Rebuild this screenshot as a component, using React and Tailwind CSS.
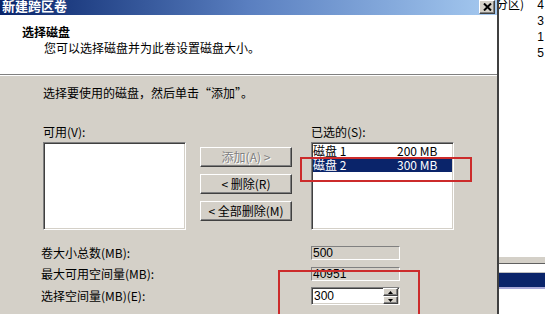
import React from "react"

const sunken = "border border-t-[#808080] border-l-[#808080] border-b-white border-r-white shadow-[inset_1px_1px_0_#404040,inset_-1px_-1px_0_#d4d0c8]"
const raised = "border border-t-white border-l-white border-b-[#404040] border-r-[#404040] shadow-[inset_-1px_-1px_0_#808080]"
const flat = "border border-t-[#808080] border-l-[#808080] border-b-white border-r-white"

function WinButton({ children, disabled }) {
  return (
    <div className={`h-[20px] w-[92px] flex items-center justify-center bg-[#d4d0c8] text-[12px] leading-[14px] ${raised} ${disabled ? "text-[#808080] [text-shadow:1px_1px_0_#fff]" : "text-black"}`}>
      {children}
    </div>
  )
}

function Field({ children }) {
  return (
    <div className={`h-[14px] w-[89px] flex items-center pl-[1px] bg-[#d4d0c8] text-[12px] leading-[12px] font-['Liberation_Sans',sans-serif] ${flat}`}>
      {children}
    </div>
  )
}

export default function App() {
  return (
    <div className="relative w-[545px] h-[314px] overflow-hidden flex bg-white text-black font-['Noto_Sans_CJK_SC',sans-serif]">
      {/* dialog */}
      <div className="w-[497px] flex flex-col bg-[#d4d0c8]">
        <div className="h-[15px] flex items-start justify-between bg-linear-to-r from-[#0a246a] via-[#5a7fc0] to-[#a6caf0]">
          <span className="pl-[2px] -mt-[3px] text-[13px] leading-[18px] font-bold text-white">新建跨区卷</span>
          <div className={`mr-[2px] w-[16px] h-[14px] flex items-center justify-center bg-[#d4d0c8] ${raised}`}>
            <svg width="9" height="8" viewBox="0 0 9 8">
              <path d="M1 0.5 L8 7.5 M8 0.5 L1 7.5" stroke="#000" strokeWidth="2" />
            </svg>
          </div>
        </div>

        <div className="h-[59px] bg-white pl-[22px] pt-[10px]">
          <div className="text-[12px] leading-[14px] font-bold">选择磁盘</div>
          <div className="pl-[22px] mt-[2px] text-[12px] leading-[14px]">您可以选择磁盘并为此卷设置磁盘大小。</div>
        </div>
        <div className="h-[2px] border-t border-t-[#808080] border-b border-b-white" />

        <div className="flex-1 pl-[43px] pt-[10px]">
          <div className="text-[12px] leading-[14px]">选择要使用的磁盘，然后单击“添加”。</div>

          <div className="flex mt-[25px]">
            <div className="w-[143px]">
              <div className="h-[17px] text-[12px] leading-[14px]">可用(V):</div>
              <div className={`h-[88px] bg-white ${sunken}`} />
            </div>
            <div className="ml-[14px] w-[92px] pt-[22px] flex flex-col gap-[7px]">
              <WinButton disabled>添加(A) &gt;</WinButton>
              <WinButton>&lt; 删除(R)</WinButton>
              <WinButton>&lt; 全部删除(M)</WinButton>
            </div>
            <div className="ml-[19px] w-[143px]">
              <div className="h-[17px] text-[12px] leading-[14px]">已选的(S):</div>
              <div className={`h-[88px] bg-white p-[1px] ${sunken}`}>
                <div className="h-[14px] flex items-center text-[12px] leading-[14px]">
                  <span className="w-[84px]">磁盘 1</span>
                  <span>200 MB</span>
                </div>
                <div className="h-[14px] flex items-center text-[12px] leading-[14px] bg-[#0a246a] text-white">
                  <span className="w-[84px]">磁盘 2</span>
                  <span>300 MB</span>
                </div>
              </div>
            </div>
          </div>

          <div className="mt-[16px] flex flex-col">
            <div className="flex items-center h-[14px]">
              <span className="-ml-[2px] w-[270px] text-[12px] leading-[14px]">卷大小总数(MB):</span>
              <Field>500</Field>
            </div>
            <div className="flex items-center h-[14px] mt-[7px]">
              <span className="-ml-[2px] w-[270px] text-[12px] leading-[14px]">最大可用空间量(MB):</span>
              <Field>40951</Field>
            </div>
            <div className="flex items-center h-[18px] mt-[6px]">
              <span className="-ml-[2px] w-[270px] text-[12px] leading-[14px]">选择空间量(MB)(E):</span>
              <div className={`h-[18px] w-[89px] flex items-center justify-between pl-[2px] pr-[1px] bg-white ${sunken}`}>
                <span className="text-[12px] leading-[12px] font-['Liberation_Sans',sans-serif]">300</span>
                <div className="flex flex-col">
                  <div className={`w-[15px] h-[8px] flex items-center justify-center bg-[#d4d0c8] ${raised}`}>
                    <svg width="5" height="3" viewBox="0 0 5 3"><path d="M2.5 0 L5 3 L0 3 Z" fill="#000" /></svg>
                  </div>
                  <div className={`w-[15px] h-[8px] flex items-center justify-center bg-[#d4d0c8] ${raised}`}>
                    <svg width="5" height="3" viewBox="0 0 5 3"><path d="M0 0 L5 0 L2.5 3 Z" fill="#000" /></svg>
                  </div>
                </div>
              </div>
            </div>
          </div>
        </div>
      </div>

      {/* background window on the right */}
      <div className="flex-1 flex flex-col border-l-2 border-l-[#404040] bg-white overflow-hidden">
        <div className="h-[257px] flex">
          <span className="-ml-[3px] -mt-[4px] text-[12px] leading-[16px] whitespace-nowrap">分区)</span>
          <div className="ml-auto pr-[1px] -mt-[3px] flex flex-col text-[12px] leading-[16px] font-['Liberation_Sans',sans-serif]">
            <span>4</span>
            <span>3</span>
            <span>1</span>
            <span>5</span>
          </div>
        </div>
        <div className="h-[6px] bg-[#d4d0c8]" />
        <div className="h-[1px] bg-[#606060]" />
        <div className="h-[8px] bg-white" />
        <div className="h-[1px] bg-[#c0c0c0]" />
        <div className="h-[14px] bg-[#0a246a]" />
        <div className="h-[2px] bg-[#a8a8d8]" />
      </div>

      {/* red annotation boxes */}
      <div className="absolute left-[300px] top-[157px] w-[172px] h-[25px] border-2 border-[#cc2b2b]" />
      <div className="absolute left-[278px] top-[270px] w-[142px] h-[60px] border-2 border-[#cc2b2b]" />
    </div>
  )
}
